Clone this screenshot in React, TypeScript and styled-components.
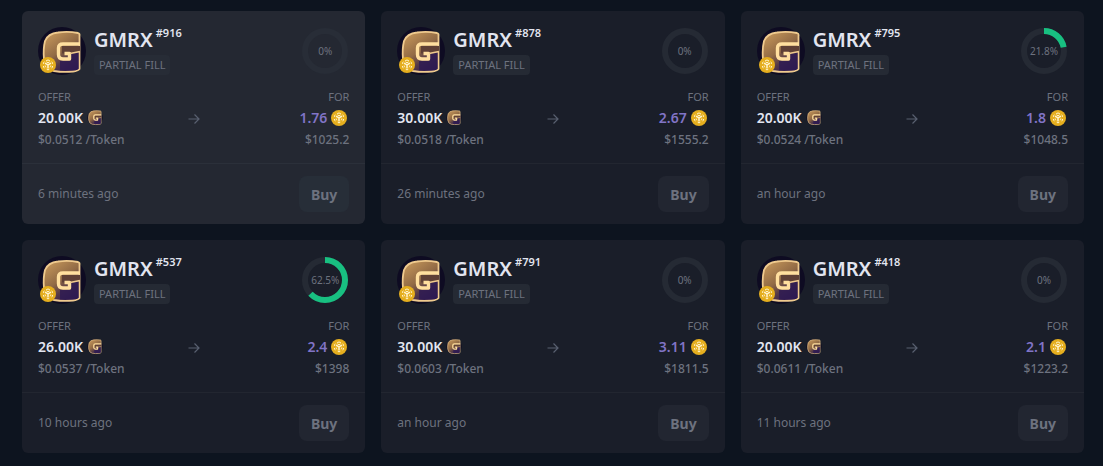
import React from 'react';
import styled, { createGlobalStyle } from 'styled-components';

const GlobalStyle = createGlobalStyle`
  * {
    box-sizing: border-box;
  }
  body {
    margin: 0;
    min-height: 100vh;
    background: #0d141f;
    color: #6d727f;
    font-family: 'Noto Sans', 'Open Sans', sans-serif;
  }
`;

const Grid = styled.main`
  display: grid;
  grid-template-columns: repeat(3, 1fr);
  gap: 16px;
  padding: 11px 19px 13px 22px;
`;

const Card = styled.article<{ $active?: boolean }>`
  background: ${p => (p.$active ? '#242832' : '#1a1e29')};
  border-radius: 6px;
`;

const CardBody = styled.div`
  height: 152px;
  padding: 16px 16px 0;
`;

const CardHeader = styled.header`
  display: flex;
  align-items: center;
  gap: 8px;
  height: 48px;
`;

const Avatar = styled.div`
  position: relative;
  width: 48px;
  height: 48px;
`;

const AvatarBadge = styled.span`
  position: absolute;
  left: 2px;
  bottom: 2px;
  display: flex;
`;

const Heading = styled.div`
  display: flex;
  flex: 1;
  flex-direction: column;
  gap: 2px;
`;

const Name = styled.h2`
  display: flex;
  align-items: flex-start;
  gap: 3px;
  margin: 0;
  color: #e2e5f0;
  font-size: 20px;
  line-height: 26px;
  font-weight: 600;
`;

const Serial = styled.span`
  font-size: 11px;
  line-height: 12px;
`;

const Tag = styled.span<{ $active?: boolean }>`
  width: fit-content;
  padding: 0 5px;
  border-radius: 4px;
  background: ${p => (p.$active ? '#272c36' : '#252a34')};
  font-size: 11px;
  line-height: 20px;
`;

const Progress = styled.div`
  display: grid;
  place-items: center;
  width: 48px;
  height: 48px;

  > * {
    grid-area: 1 / 1;
  }
`;

const Percent = styled.span`
  font-size: 10px;
  line-height: 16px;
`;

const Trade = styled.div`
  display: grid;
  grid-template-columns: 1fr auto 1fr;
  align-items: center;
  margin-top: 12px;
`;

const Side = styled.div<{ $end?: boolean }>`
  display: flex;
  flex-direction: column;
  align-items: ${p => (p.$end ? 'flex-end' : 'flex-start')};
`;

const Label = styled.span`
  font-size: 11px;
  line-height: 20px;
`;

const Amount = styled.span<{ $price?: boolean }>`
  display: flex;
  align-items: center;
  gap: 4px;
  padding-right: ${p => (p.$price ? '2px' : '0')};
  color: ${p => (p.$price ? '#8174c6' : '#e2e5f0')};
  font-size: 14px;
  line-height: 22px;
  font-weight: 600;
`;

const Detail = styled.span`
  font-size: 12px;
  line-height: 22px;
  font-weight: 500;
`;

const CardFooter = styled.footer<{ $active?: boolean }>`
  display: flex;
  align-items: center;
  justify-content: space-between;
  height: 61px;
  padding: 0 16px;
  border-top: 1px solid ${p => (p.$active ? '#2b303a' : '#222630')};
`;

const Age = styled.time`
  font-size: 12px;
  line-height: 20px;
`;

const BuyButton = styled.button<{ $active?: boolean }>`
  height: 36px;
  padding: 0 12px;
  border: 0;
  border-radius: 8px;
  background: ${p => (p.$active ? '#272e38' : '#222631')};
  color: #6d727f;
  font-family: inherit;
  font-size: 14px;
  font-weight: 700;
  cursor: pointer;
`;

function TokenMark({ id }: { id: string }) {
  return (
    <>
      <defs>
        <linearGradient id={id} x1="0.1" y1="0" x2="0.75" y2="1">
          <stop offset="0" stopColor="#c99a5c" />
          <stop offset="0.5" stopColor="#916a45" />
          <stop offset="0.72" stopColor="#553a48" />
          <stop offset="1" stopColor="#2b1750" />
        </linearGradient>
      </defs>
      <path
        d="M20 5.5 Q30 4 40 6 Q42 6.500 41.500 9 V42 Q40 44 35 44.500 Q25 45.500 16 44 Q7 42 6 32 Q5 22 7 14 Q10 6.500 20 5.500Z"
        fill={`url(#${id})`}
        stroke="#efca8e"
        strokeWidth="1.8"
      />
      <path d="M22 34 H33 V27 L40.500 25.500 V42 Q38 43.500 34 43.500 H22Z" fill="#2f1b52" opacity="0.85" />
      <path d="M24 19 H42 V24.500 L33 26.500 H24Z" fill="#5f4036" />
      <path
        d="M42 17 H25 Q20.500 17 20.500 21 V27.500 Q20.500 32 25 32 H31.500 V26.500 H26.500"
        fill="none"
        stroke="#ffdf9f"
        strokeWidth="3.400"
        strokeLinejoin="round"
      />
      <path d="M32 26.500 L42 24.500" fill="none" stroke="#efca8e" strokeWidth="1.400" />
    </>
  );
}

function TokenAvatar({ id }: { id: string }) {
  return (
    <svg width="48" height="48" viewBox="0 0 48 48" aria-hidden="true">
      <circle cx="24" cy="24" r="24" fill="#0e0b22" />
      <TokenMark id={id} />
    </svg>
  );
}

function TokenIcon({ id }: { id: string }) {
  return (
    <svg width="16" height="16" viewBox="1 3 46 46" aria-hidden="true">
      <circle cx="24" cy="25" r="22" fill="#0e0b22" />
      <TokenMark id={id} />
    </svg>
  );
}

function BnbLogo() {
  return (
    <svg width="16" height="16" viewBox="0 0 16 16" aria-hidden="true">
      <circle cx="8" cy="8" r="8" fill="#e5ae1e" />
      <g fill="none" stroke="#fff3cd">
        <path
          d="M6 4 L8 2.900 L10 4 M11.500 4.900 L12.500 5.600 V6.800 M12.500 9 V10.300 L11.500 10.900 M9.300 12.200 L8 12.900 L6.700 12.200 M4.500 10.900 L3.500 10.300 V9 M3.500 6.800 V5.600 L4.500 4.900"
          strokeWidth="1"
        />
        <path d="M5 6.200 L8 7.900 L11 6.200 M8 7.900 V11.500" strokeWidth="1.5" />
        <path d="M6.500 5 L8 5.800 L9.500 5 M5.200 8.500 V9.500 L6.200 10.100 M10.800 8.500 V9.500 L9.800 10.100" strokeWidth="1" />
      </g>
    </svg>
  );
}

function Arrow() {
  return (
    <svg width="12" height="12" viewBox="0 0 12 12" fill="none" stroke="#596070" strokeWidth="1.2" aria-hidden="true">
      <path d="M0.500 6 H11 M6.500 1.500 L11 6 L6.500 10.500" />
    </svg>
  );
}

const RADIUS = 20;
const CIRCUMFERENCE = 2 * Math.PI * RADIUS;

function Ring({ value, active }: { value: number; active?: boolean }) {
  return (
    <Progress>
      <svg width="48" height="48" viewBox="0 0 48 48" fill="none" strokeWidth="6" aria-hidden="true">
        <circle cx="24" cy="24" r={RADIUS} stroke={active ? '#282d37' : '#252a34'} />
        {value > 0 && (
          <circle
            cx="24"
            cy="24"
            r={RADIUS}
            stroke="#18c081"
            strokeDasharray={`${(CIRCUMFERENCE * value) / 100} ${CIRCUMFERENCE}`}
            transform="rotate(-90 24 24)"
          />
        )}
      </svg>
      <Percent>{value}%</Percent>
    </Progress>
  );
}

const offers = [
  { id: 916, filled: 0, amount: '20.00K', rate: '$0.0512', price: '1.76', usd: '$1025.2', age: '6 minutes ago', active: true },
  { id: 878, filled: 0, amount: '30.00K', rate: '$0.0518', price: '2.67', usd: '$1555.2', age: '26 minutes ago' },
  { id: 795, filled: 21.8, amount: '20.00K', rate: '$0.0524', price: '1.8', usd: '$1048.5', age: 'an hour ago' },
  { id: 537, filled: 62.5, amount: '26.00K', rate: '$0.0537', price: '2.4', usd: '$1398', age: '10 hours ago' },
  { id: 791, filled: 0, amount: '30.00K', rate: '$0.0603', price: '3.11', usd: '$1811.5', age: 'an hour ago' },
  { id: 418, filled: 0, amount: '20.00K', rate: '$0.0611', price: '2.1', usd: '$1223.2', age: '11 hours ago' },
];

export default function App() {
  return (
    <>
      <GlobalStyle />
      <Grid>
        {offers.map(offer => (
          <Card key={offer.id} $active={offer.active}>
            <CardBody>
              <CardHeader>
                <Avatar>
                  <TokenAvatar id={`avatar-${offer.id}`} />
                  <AvatarBadge><BnbLogo /></AvatarBadge>
                </Avatar>
                <Heading>
                  <Name>GMRX <Serial>#{offer.id}</Serial></Name>
                  <Tag $active={offer.active}>PARTIAL FILL</Tag>
                </Heading>
                <Ring value={offer.filled} active={offer.active} />
              </CardHeader>
              <Trade>
                <Side>
                  <Label>OFFER</Label>
                  <Amount>{offer.amount} <TokenIcon id={`token-${offer.id}`} /></Amount>
                  <Detail>{offer.rate} /Token</Detail>
                </Side>
                <Arrow />
                <Side $end>
                  <Label>FOR</Label>
                  <Amount $price>{offer.price} <BnbLogo /></Amount>
                  <Detail>{offer.usd}</Detail>
                </Side>
              </Trade>
            </CardBody>
            <CardFooter $active={offer.active}>
              <Age>{offer.age}</Age>
              <BuyButton type="button" $active={offer.active}>Buy</BuyButton>
            </CardFooter>
          </Card>
        ))}
      </Grid>
    </>
  );
}
